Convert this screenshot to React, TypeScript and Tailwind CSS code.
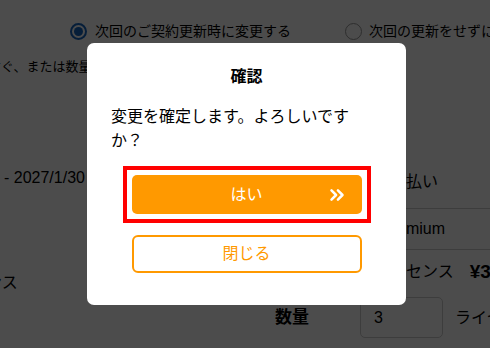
import { ChevronsRight } from "lucide-react";

const font = "font-['Liberation_Sans','Noto_Sans_CJK_JP',sans-serif]";

function Radio({ checked }: { checked?: boolean }) {
  return checked ? (
    <span className="flex size-[17px] shrink-0 items-center justify-center rounded-full border-2 border-[#1565c0] bg-white">
      <span className="size-[9px] rounded-full bg-[#1565c0]" />
    </span>
  ) : (
    <span className="block size-[17px] shrink-0 rounded-full border border-[#999] bg-white" />
  );
}

export default function App() {
  return (
    <div className={`relative h-[348px] w-[490px] overflow-hidden bg-white text-black ${font}`}>
      {/* page behind the dialog */}
      <div className="mt-[23px] flex h-[17px] items-center whitespace-nowrap text-[14px]">
        <span className="ml-[70px] shrink-0"><Radio checked /></span>
        <span className="ml-[8px] shrink-0 leading-[17px]">次回のご契約更新時に変更する</span>
        <span className="ml-[54px] shrink-0"><Radio /></span>
        <span className="ml-[7px] shrink-0 leading-[17px]">次回の更新をせずに変更する</span>
      </div>
      <p className="mt-[19px] -ml-[12px] whitespace-nowrap text-[13px] leading-[16px]">すぐ、または数量を変更する場合はこちら</p>

      <div className="mt-[81px] grid grid-cols-[374px_116px] whitespace-nowrap">
        <div className="flex flex-col">
          <span className="ml-[4px] mt-[13px] text-[16px] leading-[18px]">- 2027/1/30</span>
          <span className="-ml-[62px] mt-[87px] text-[16px] leading-[18px]">ライセンス</span>
        </div>
        <div className="flex flex-col">
          <div className="flex h-[53px] items-center border-b border-[#ccc] text-[16px]">月額払い</div>
          <div className="flex h-[41px] items-center border-b border-[#ccc] pl-[7px] text-[16px]">Premium</div>
          <div className="flex h-[44px] items-center text-[16px]">
            ライセンス
            <span className="ml-[16px] text-[19px] font-bold">¥3,300</span>
          </div>
        </div>
      </div>

      <div className="mt-[3px] ml-[275px] flex items-center whitespace-nowrap">
        <span className="w-[85px] shrink-0 text-[17px] font-bold">数量</span>
        <span className="flex h-[41px] w-[83px] shrink-0 items-center rounded-[5px] border border-[#ccc] pl-[13px] text-[16px]">3</span>
        <span className="ml-[12px] shrink-0 text-[16px]">ライセンス</span>
      </div>

      {/* dialog */}
      <div className="absolute inset-0 flex items-center justify-center bg-black/70">
        <div className="ml-[3px] w-[319px] rounded-[7px] bg-white px-[24px] pt-[22px] pb-[32px]">
          <h2 className="text-center text-[16px] font-bold leading-[24px]">確認</h2>
          <p className="mt-[16px] w-[258px] text-[16px] leading-[24px]">変更を確定します。よろしいですか？</p>
          <div className="mx-auto mt-[13px] w-[248px] border-4 border-[#ff0000] p-[5px]">
            <button className="relative flex h-[39px] w-full items-center justify-center rounded-[5px] bg-[#ff9900] text-[16px] text-white">
              はい
              <ChevronsRight className="absolute right-[14px] size-[22px]" strokeWidth={2.75} />
            </button>
          </div>
          <button className="mx-auto mt-[12px] flex h-[38px] w-[230px] items-center justify-center rounded-[6px] border-2 border-[#ff9900] bg-white text-[16px] text-[#ff9900]">
            閉じる
          </button>
        </div>
      </div>
    </div>
  );
}
